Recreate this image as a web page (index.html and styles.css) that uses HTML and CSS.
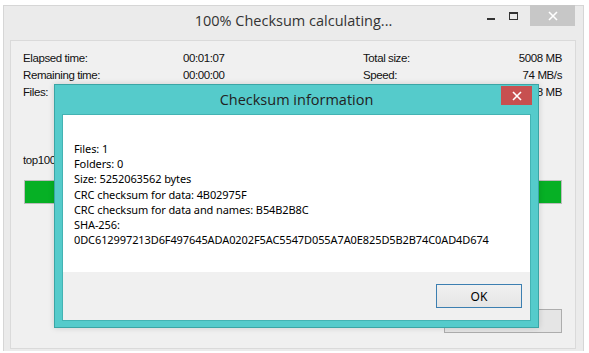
FILE: index.html
```html
<!DOCTYPE html>
<html>
<head>
  <title>100% Checksum calculating...</title>
  <link rel="stylesheet" href="styles.css">
</head>
<body>
  <div class="window">
    <div class="titlebar">
      <span class="title">100% Checksum calculating...</span>
      <div class="controls">
        <span class="ctl ctl-min"><i></i></span>
        <span class="ctl ctl-max"><i></i></span>
        <span class="ctl ctl-close">
          <svg width="10" height="10" viewBox="0 0 10 10"><path d="M1 1L9 9M9 1L1 9" stroke="#fff" stroke-width="1.6"/></svg>
        </span>
      </div>
    </div>

    <div class="panel">
      <div class="stats">
        <span>Elapsed time:</span><span>00:01:07</span><span>Total size:</span><span class="num">5008 MB</span>
        <span>Remaining time:</span><span>00:00:00</span><span>Speed:</span><span class="num">74 MB/s</span>
        <span>Files:</span><span></span><span></span><span class="num">5008 MB</span>
      </div>
      <div class="file-name">top100</div>
      <div class="progress"><div class="progress-bar" style="width: 100%"></div></div>
      <div class="actions"><button class="btn"></button></div>
    </div>

    <div class="dialog">
      <div class="dialog-title">
        <span>Checksum information</span>
        <span class="dialog-close">
          <svg width="10" height="10" viewBox="0 0 10 10"><path d="M1 1L9 9M9 1L1 9" stroke="#fff" stroke-width="1.6"/></svg>
        </span>
      </div>
      <div class="dialog-body">
        <div>Files: 1</div>
        <div>Folders: 0</div>
        <div>Size: 5252063562 bytes</div>
        <div>CRC checksum for data: 4B02975F</div>
        <div>CRC checksum for data and names: B54B2B8C</div>
        <div>SHA-256:</div>
        <div>0DC612997213D6F497645ADA0202F5AC5547D055A7A0E825D5B2B74C0AD4D674</div>
      </div>
      <div class="dialog-footer">
        <button class="ok-btn">OK</button>
      </div>
    </div>
  </div>
</body>
</html>
```

FILE: styles.css
```css
body {
  margin: 0;
  background: #fff;
  font-family: "Liberation Sans", Arial, sans-serif;
}

.window {
  position: relative;
  width: 581px;
  height: 346px;
  margin: 5px 0 0 3px;
  background: #ebebeb;
  border: 1px solid #d6d6d6;
  border-bottom: none;
  box-sizing: border-box;
}

.titlebar {
  height: 32px;
  display: flex;
  align-items: center;
  justify-content: center;
  position: relative;
}

.title {
  font-family: "Open Sans", sans-serif;
  font-size: 14.5px;
  color: #333;
  margin-top: -4px;
}

.controls {
  position: absolute;
  top: -1px;
  right: 8px;
  display: flex;
  align-items: flex-start;
}

.ctl {
  display: flex;
  align-items: center;
  justify-content: center;
  height: 21px;
}

.ctl-min {
  width: 26px;
}

.ctl-min i {
  display: block;
  width: 8px;
  height: 2px;
  background: #333;
  margin-top: 6px;
}

.ctl-max {
  width: 18px;
  margin-right: 8px;
}

.ctl-max i {
  display: block;
  width: 7px;
  height: 5px;
  border: 1px solid #333;
  border-top-width: 2px;
}

.ctl-close {
  width: 45px;
  background: #c7c7c7;
}

.panel {
  margin: 2px 7px 0 6px;
  height: 309px;
  background: #f0f0f0;
  border: 1px solid #dadada;
  box-sizing: border-box;
  padding: 9px 13px 0 12px;
  font-size: 11.5px;
  color: #111;
  letter-spacing: -0.4px;
}

.stats {
  display: grid;
  grid-template-columns: 160px 180px 1fr auto;
  line-height: 17px;
}

.num {
  text-align: right;
}

.file-name {
  margin-top: 51px;
  line-height: 17px;
}

.progress {
  margin: 11px 0 0 1px;
  height: 24px;
  border: 1px solid #bcbcbc;
  background: #e6e6e6;
  box-sizing: border-box;
}

.progress-bar {
  height: 100%;
  background: #06b025;
}

.actions {
  display: flex;
  justify-content: flex-end;
  margin-top: 105px;
}

.btn {
  width: 118px;
  height: 24px;
  border: 1px solid #adadad;
  background: #e5e5e5;
}

.dialog {
  position: absolute;
  left: 50px;
  top: 78px;
  width: 485px;
  height: 244px;
  background: #55cbcb;
  border: 1px solid #3aa5a5;
  box-sizing: border-box;
  padding: 0 7px 6px 7px;
  display: flex;
  flex-direction: column;
  box-shadow: 0 0 6px rgba(0, 0, 0, 0.15);
}

.dialog-title {
  height: 29px;
  display: flex;
  align-items: center;
  justify-content: center;
  position: relative;
  font-family: "Open Sans", sans-serif;
  font-size: 14.5px;
  color: #222;
}

.dialog-close {
  position: absolute;
  top: 1px;
  right: -1px;
  width: 31px;
  height: 19px;
  background: #c75050;
  display: flex;
  align-items: center;
  justify-content: center;
}

.dialog-body {
  background: #fff;
  height: 158px;
  padding: 26px 0 0 11px;
  box-sizing: border-box;
  font-family: "Noto Sans", sans-serif;
  font-size: 11px;
  letter-spacing: -0.1px;
  line-height: 15.2px;
  color: #000;
  border: 1px solid #43b3b3;
  border-bottom: none;
}

.dialog-footer {
  flex: 1;
  background: #f0f0f0;
  display: flex;
  justify-content: flex-end;
  align-items: flex-start;
  padding: 12px 8px 0 0;
  border: 1px solid #43b3b3;
  border-top: none;
}

.ok-btn {
  width: 86px;
  height: 24px;
  border: 1px solid #3c7fb1;
  background: linear-gradient(#f0f0f0, #e5e5e5);
  font-family: "Noto Sans", sans-serif;
  font-size: 12px;
  color: #000;
}
```
